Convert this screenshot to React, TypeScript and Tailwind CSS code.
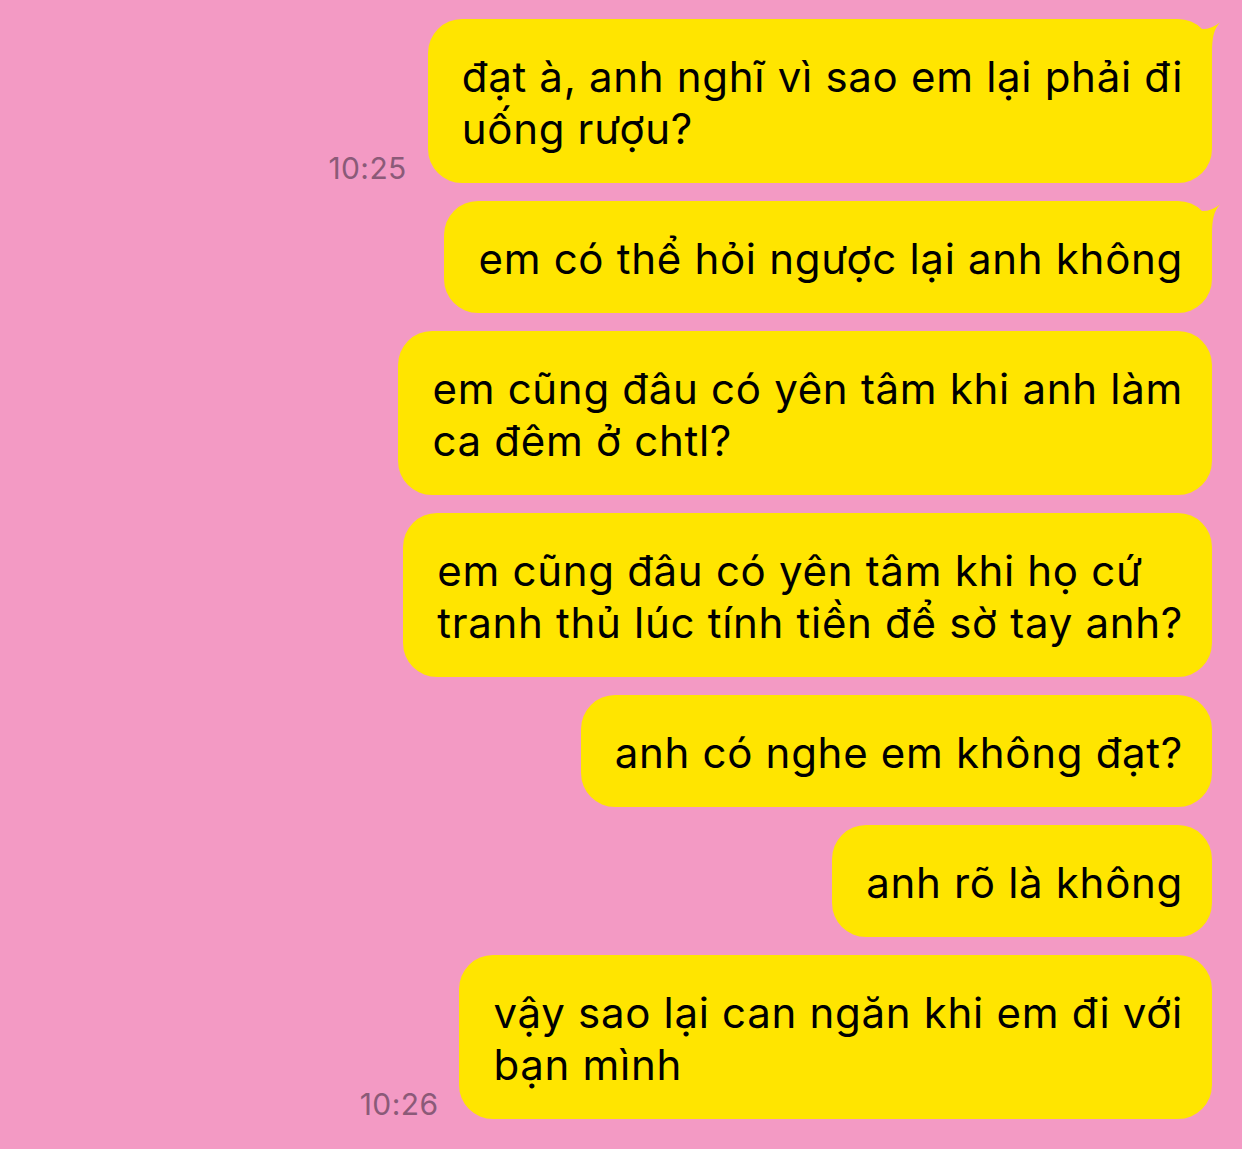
import React from "react";

const FONT = { fontFamily: "Inter, 'Noto Sans', sans-serif" };

function Tail() {
  return (
    <svg
      className="absolute top-0 right-[-10px] w-[30px] h-[40px]"
      viewBox="0 0 30 40"
    >
      <path d="M2 8 C10 12 20 10 28 3.5 C22 10 20 18 20 34 L2 34 Z" fill="#FFE500" />
    </svg>
  );
}

function Bubble({
  lines,
  tail,
  time,
}: {
  lines: string[];
  tail?: boolean;
  time?: string;
}) {
  return (
    <div className="flex items-end justify-end gap-[21px]">
      {time && (
        <div
          className="text-[30px] leading-[34px] tracking-[0.4px] text-[#8b5a78] mb-[-2px]"
          style={FONT}
        >
          {time}
        </div>
      )}
      <div
        className="relative bg-[#FFE500] rounded-[34px] pl-[34px] pr-[29px] pt-[32px] pb-[28px] text-black text-[42px] leading-[52px] tracking-[0.7px]"
        style={FONT}
      >
        {tail && <Tail />}
        {lines.map((l, i) => (
          <div key={i} className="whitespace-nowrap">
            {l}
          </div>
        ))}
      </div>
    </div>
  );
}

export default function App() {
  return (
    <div className="w-[1242px] h-[1149px] bg-[#F39AC4] pt-[19px] pr-[30px] flex flex-col gap-[18px] overflow-hidden">
      <Bubble
        lines={["đạt à, anh nghĩ vì sao em lại phải đi", "uống rượu?"]}
        tail
        time="10:25"
      />
      <Bubble lines={["em có thể hỏi ngược lại anh không"]} tail />
      <Bubble lines={["em cũng đâu có yên tâm khi anh làm", "ca đêm ở chtl?"]} />
      <Bubble
        lines={["em cũng đâu có yên tâm khi họ cứ", "tranh thủ lúc tính tiền để sờ tay anh?"]}
      />
      <Bubble lines={["anh có nghe em không đạt?"]} />
      <Bubble lines={["anh rõ là không"]} />
      <Bubble lines={["vậy sao lại can ngăn khi em đi với", "bạn mình"]} time="10:26" />
    </div>
  );
}
